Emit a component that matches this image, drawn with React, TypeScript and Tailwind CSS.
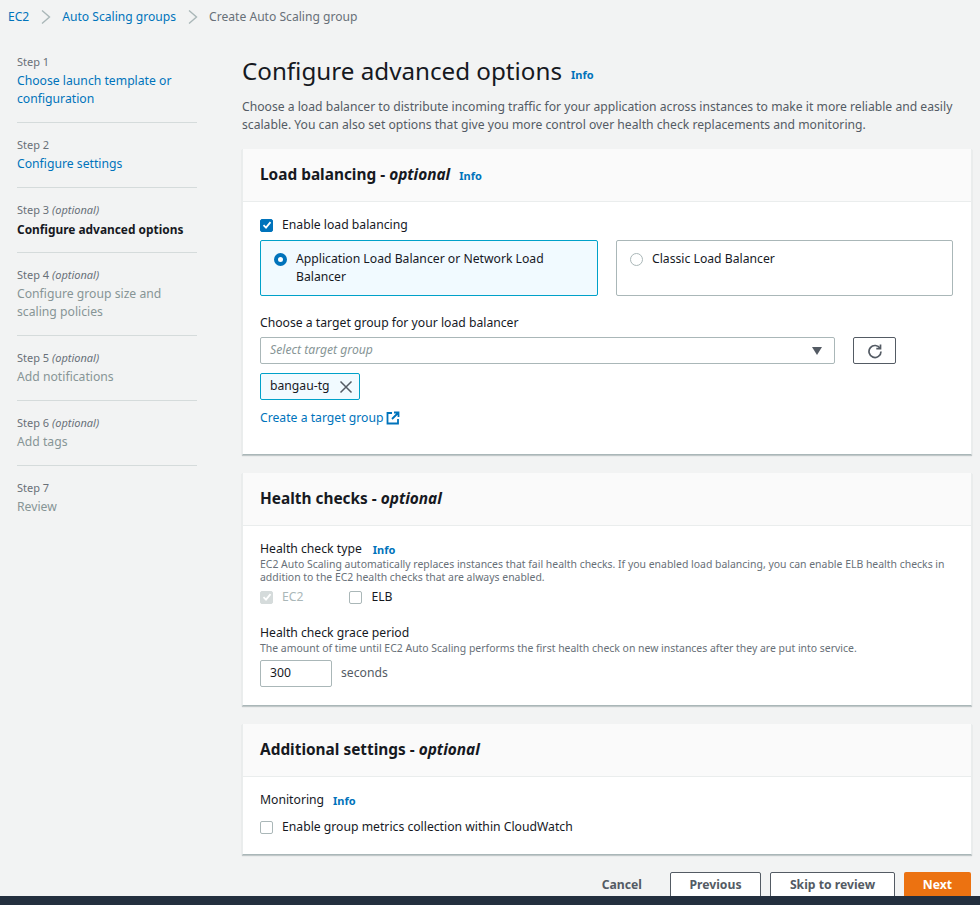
import React from "react";

const FONT = { fontFamily: '"Noto Sans", sans-serif' };

function Info() {
  return <span className="text-[11px] font-bold text-[#0073bb] leading-none">Info</span>;
}

function Step({ step, opt, title, state, last }: { step: string; opt?: boolean; title: React.ReactNode; state: "link" | "active" | "off"; last?: boolean }) {
  const cls = state === "link" ? "text-[#0073bb] text-[12.2px]" : state === "active" ? "text-[#16191f] font-bold text-[11.9px]" : "text-[#879596] text-[12.2px]";
  return (
    <div className={`pb-[14px] mb-[13px] ${last ? "" : "border-b border-[#d5dbdb]"}`}>
      <div className="text-[11px] leading-[18px] mb-px text-[#687078]">
        {step} {opt && <i>(optional)</i>}
      </div>
      <div className={`leading-[18px] ${cls}`}>{title}</div>
    </div>
  );
}

function Card({ title, info, children, bodyClass }: { title: string; info?: boolean; children: React.ReactNode; bodyClass: string }) {
  return (
    <section className="bg-white border-l border-r border-[#eaeded] border-b-[#aab7b8] border-b shadow-[0_1px_1px_rgba(0,28,36,0.2)]">
      <header className="h-[53px] bg-[#fafafa] border-b border-[#eaeded] flex items-center px-[17px] gap-[9px] text-[#16191f]">
        <h2 className="text-[15.4px] font-bold">
          {title} - <i>optional</i>
        </h2>
        {info && <Info />}
      </header>
      <div className={bodyClass}>{children}</div>
    </section>
  );
}

function Check({ checked, disabled }: { checked?: boolean; disabled?: boolean }) {
  const bg = disabled ? "bg-[#d5dbdb] border-[#d5dbdb]" : checked ? "bg-[#0073bb] border-[#0073bb]" : "bg-white border-[#aab7b8]";
  return (
    <span className={`w-[13px] h-[13px] rounded-[2px] border flex items-center justify-center shrink-0 ${bg}`}>
      {checked && (
        <svg width="10" height="10" viewBox="0 0 10 10" fill="none" stroke="white" strokeWidth="1.8">
          <path d="M1.5 5.2 L4 7.6 L8.5 2.2" />
        </svg>
      )}
    </span>
  );
}

function Chevron() {
  return (
    <svg className="mx-[11.5px] shrink-0" width="10" height="14" viewBox="0 0 10 14" fill="none" stroke="#aab7b8" strokeWidth="1.4">
      <path d="M1 0.5 L8.5 7 L1 13.5" />
    </svg>
  );
}

export default function App() {
  return (
    <div style={FONT} className="h-[905px] w-[980px] overflow-hidden bg-[#f2f3f3] flex flex-col text-[#16191f]">
      <div className="flex-1 min-h-0 overflow-hidden">
        <nav className="h-[34px] pl-[8px] flex items-center text-[12.1px]">
          <span className="text-[#0073bb]">EC2</span>
          <Chevron />
          <span className="text-[#0073bb]">Auto Scaling groups</span>
          <Chevron />
          <span className="text-[#687078]">Create Auto Scaling group</span>
        </nav>
        <div className="flex pl-[17px]">
          <aside className="w-[180px] pt-[19px] shrink-0">
            <Step step="Step 1" state="link" title={<>Choose launch template or<br />configuration</>} />
            <Step step="Step 2" state="link" title="Configure settings" />
            <Step step="Step 3" opt state="active" title="Configure advanced options" />
            <Step step="Step 4" opt state="off" title={<>Configure group size and<br />scaling policies</>} />
            <Step step="Step 5" opt state="off" title="Add notifications" />
            <Step step="Step 6" opt state="off" title="Add tags" />
            <Step step="Step 7" state="off" title="Review" last />
          </aside>
          <main className="ml-[45px] w-[730px] shrink-0">
            <div className="pt-[19px] flex items-center gap-[9px] h-[54px]">
              <h1 className="text-[24.2px] leading-[36px] font-normal">Configure advanced options</h1>
              <span className="mt-[4px]"><Info /></span>
            </div>
            <p className="mt-[10px] text-[12.17px] leading-[18px] text-[#545b64]">
              Choose a load balancer to distribute incoming traffic for your application across instances to make it more reliable and easily scalable. You can also set options that give you more control over health check replacements and monitoring.
            </p>
            <div className="mt-[15px] flex flex-col gap-[18px]">
              <Card title="Load balancing" info bodyClass="px-[17px] pt-[14px] h-[252px]">
                <label className="flex items-center gap-[9px] text-[12.2px] leading-[18px]">
                  <Check checked />
                  Enable load balancing
                </label>
                <div className="mt-[6px] flex gap-[18px]">
                  <div className="w-[338px] h-[56px] rounded-[2px] border border-[#00a1c9] bg-[#f1faff] px-[13px] py-[9px] flex gap-[9px] text-[12.2px] leading-[18px]">
                    <span className="mt-[3px] w-[13px] h-[13px] rounded-full border-[4px] border-[#0073bb] bg-white shrink-0" />
                    <span>Application Load Balancer or Network Load Balancer</span>
                  </div>
                  <div className="w-[337px] h-[56px] rounded-[2px] border border-[#aab7b8] bg-white px-[13px] py-[9px] flex gap-[9px] text-[12.2px] leading-[18px]">
                    <span className="mt-[3px] w-[13px] h-[13px] rounded-full border border-[#aab7b8] bg-white shrink-0" />
                    <span>Classic Load Balancer</span>
                  </div>
                </div>
                <div className="mt-[18px] text-[12.2px] leading-[18px]">Choose a target group for your load balancer</div>
                <div className="mt-[5px] flex gap-[18px]">
                  <div className="w-[575px] h-[27px] rounded-[2px] border border-[#aab7b8] flex items-center justify-between pl-[9px] pr-[12px]">
                    <i className="text-[12.2px] text-[#879596]">Select target group</i>
                    <svg width="10" height="8" viewBox="0 0 10 8" fill="#545b64"><path d="M0 0 H10 L5 8 Z" /></svg>
                  </div>
                  <div className="w-[43px] h-[27px] rounded-[2px] border border-[#545b64] flex items-center justify-center">
                    <svg width="16" height="16" viewBox="0 0 16 16" fill="none" stroke="#545b64" strokeWidth="1.7">
                      <path d="M13.2 5.5 A6 6 0 1 0 14 8.5" />
                      <path d="M13.5 1.5 V5.7 H9.3" />
                    </svg>
                  </div>
                </div>
                <div className="mt-[9px] w-[100px] h-[27px] rounded-[2px] border border-[#00a1c9] bg-[#f1faff] flex items-center pl-[9px] gap-[9px] text-[12.2px]">
                  <span>bangau-tg</span>
                  <svg width="14" height="14" viewBox="0 0 14 14" fill="none" stroke="#545b64" strokeWidth="1.5"><path d="M1.5 1.5 L12.5 12.5 M12.5 1.5 L1.5 12.5" /></svg>
                </div>
                <div className="mt-[9px] flex items-center gap-[3px] text-[12.2px] leading-[18px] text-[#0073bb]">
                  Create a target group
                  <svg width="14" height="14" viewBox="0 0 14 14" fill="none" stroke="#0073bb" strokeWidth="1.8">
                    <path d="M6 2 H1.5 V12.5 H12 V8" />
                    <path d="M8 1.5 H12.5 V6 M12.5 1.5 L6 8" />
                  </svg>
                </div>
              </Card>
              <Card title="Health checks" bodyClass="px-[17px] pt-[14px] h-[179px]">
                <div className="flex items-center gap-[11px] text-[12.2px] leading-[18px]">Health check type <Info /></div>
                <p className="text-[10.45px] leading-[13px] text-[#687078]">
                  EC2 Auto Scaling automatically replaces instances that fail health checks. If you enabled load balancing, you can enable ELB health checks in addition to the EC2 health checks that are always enabled.
                </p>
                <div className="mt-[4px] flex items-center text-[12.2px] leading-[18px]">
                  <Check checked disabled />
                  <span className="ml-[9px] text-[#aab7b8]">EC2</span>
                  <span className="ml-[46px]"><Check /></span>
                  <span className="ml-[9px]">ELB</span>
                </div>
                <div className="mt-[18px] text-[12.2px] leading-[18px]">Health check grace period</div>
                <p className="text-[10.45px] leading-[13px] text-[#687078]">
                  The amount of time until EC2 Auto Scaling performs the first health check on new instances after they are put into service.
                </p>
                <div className="mt-[5px] flex items-center gap-[9px] text-[12.2px]">
                  <span className="w-[72px] h-[27px] rounded-[2px] border border-[#aab7b8] flex items-center pl-[9px]">300</span>
                  <span className="text-[#545b64]">seconds</span>
                </div>
              </Card>
              <Card title="Additional settings" bodyClass="px-[17px] pt-[14px] h-[77px]">
                <div className="flex items-center gap-[9px] text-[12.2px] leading-[18px]">Monitoring <Info /></div>
                <label className="mt-[9px] flex items-center gap-[9px] text-[12.2px] leading-[18px]">
                  <Check />
                  Enable group metrics collection within CloudWatch
                </label>
              </Card>
            </div>
            <div className="mt-[17px] flex justify-end items-start text-[12.2px] font-bold text-[#545b64] pr-px">
              <span className="mr-[28px] h-[27px] flex items-center">Cancel</span>
              <span className="w-[91px] h-[27px] rounded-[2px] border border-[#545b64] bg-white flex items-center justify-center mr-[9px]">Previous</span>
              <span className="w-[125px] h-[27px] rounded-[2px] border border-[#545b64] bg-white flex items-center justify-center mr-[9px]">Skip to review</span>
              <span className="w-[67px] h-[27px] rounded-[2px] bg-[#ec7211] text-white flex items-center justify-center">Next</span>
            </div>
          </main>
        </div>
      </div>
      <div className="h-[9px] shrink-0 bg-[#232f3e]" />
    </div>
  );
}
